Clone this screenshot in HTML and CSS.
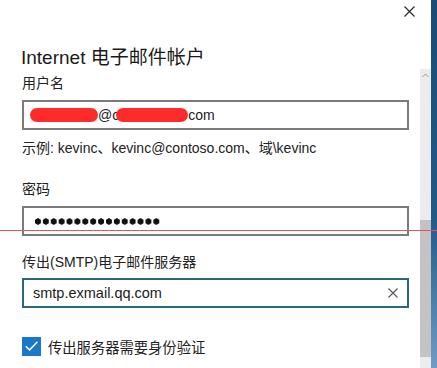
FILE: index.html
```html
<!DOCTYPE html>
<html lang="zh-CN">
<head>
    <meta charset="UTF-8">
    <title>Internet 电子邮件帐户</title>
    <link rel="stylesheet" href="styles.css">
</head>
<body>
<div class="screen">
    <div class="dialog">
        <div class="content">
            <div class="topbar">
                <button class="close-btn" aria-label="关闭">
                    <svg width="11" height="11" viewBox="0 0 11 11"><path d="M0.5 0.5 L10.5 10.5 M10.5 0.5 L0.5 10.5" stroke="#2b2b2b" stroke-width="1.2" fill="none"/></svg>
                </button>
            </div>
            <h1 class="title">Internet 电子邮件帐户</h1>

            <div class="label label-first">用户名</div>
            <div class="field"><span class="blot blot-a"></span>@c<span class="blot blot-b"></span>com</div>
            <p class="hint">示例: kevinc、kevinc@contoso.com、域\kevinc</p>

            <div class="label label-gap">密码</div>
            <div class="field"><span class="dots"></span></div>

            <div class="label label-mid">传出(SMTP)电子邮件服务器</div>
            <div class="field field-focus">
                <span>smtp.exmail.qq.com</span>
                <svg class="clear-icon" width="10" height="10" viewBox="0 0 10 10"><path d="M0.5 0.5 L9.5 9.5 M9.5 0.5 L0.5 9.5" stroke="#555" stroke-width="1.1" fill="none"/></svg>
            </div>

            <div class="check-row">
                <span class="checkbox">
                    <svg width="20" height="20" viewBox="0 0 20 20"><path d="M4 10.2 L8 14.2 L16.2 5.6" stroke="#fff" stroke-width="1.6" fill="none"/></svg>
                </span>
                传出服务器需要身份验证
            </div>
        </div>
        <div class="scrollbar">
            <span class="scroll-arrow">
                <svg width="7" height="5" viewBox="0 0 7 5"><path d="M0.5 4 L3.5 1 L6.5 4" stroke="#9a9a9a" stroke-width="1" fill="none"/></svg>
            </span>
            <span class="scroll-thumb"></span>
        </div>
    </div>
    <div class="desktop"></div>
    <div class="guide-line"></div>
</div>
</body>
</html>
```

FILE: styles.css
```css
html, body {
    margin: 0;
    padding: 0;
    background: #fff;
}

.screen {
    position: relative;
    display: flex;
    width: 437px;
    height: 368px;
    overflow: hidden;
    font-family: "Liberation Sans", "Noto Sans CJK SC", sans-serif;
    color: #1b1b1b;
}

.dialog {
    display: flex;
    width: 431px;
    background: #fff;
}

.content {
    width: 420px;
    padding-left: 22px;
    box-sizing: border-box;
}

.topbar {
    display: flex;
    justify-content: flex-end;
    height: 46px;
}

.close-btn {
    width: 22px;
    height: 22px;
    padding: 0;
    border: none;
    background: none;
    display: flex;
    align-items: center;
    justify-content: center;
}

.title {
    margin: 0 0 0 -1px;
    font-size: 19px;
    font-weight: normal;
    line-height: 24px;
    height: 24px;
    color: #1a1a1a;
}

.label {
    font-size: 14px;
    line-height: 20px;
    height: 20px;
    margin-bottom: 7px;
    color: #222;
}

.label-first {
    margin-top: 3px;
}

.label-gap {
    margin-top: 21px;
}

.label-mid {
    margin-top: 16px;
    margin-bottom: 6px;
}

.field {
    display: flex;
    align-items: center;
    width: 387px;
    height: 30px;
    box-sizing: border-box;
    border: 2px solid #7b7b7b;
    padding: 0 9px;
    font-size: 14px;
    color: #1b1b1b;
    background: #fff;
}

.field-focus {
    justify-content: space-between;
    border-color: #2a6878;
    font-size: 14.5px;
}

.blot {
    display: inline-block;
    height: 14px;
    border-radius: 7px;
    background: #ff2b2b;
}

.blot-a {
    width: 68px;
    margin-left: -3px;
}

.blot-b {
    width: 72px;
    margin-left: -3px;
}

.dots {
    display: inline-block;
    width: 127px;
    height: 7px;
    margin-left: 1px;
    background: radial-gradient(circle, #111 2.9px, transparent 3.4px) 0 0 / 7.9px 7px repeat-x;
}

.hint {
    margin: 8px 0 0;
    font-size: 14px;
    line-height: 20px;
    height: 20px;
    color: #222;
}

.check-row {
    display: flex;
    align-items: center;
    gap: 7px;
    margin-top: 28px;
    height: 20px;
    font-size: 14.3px;
    color: #222;
}

.checkbox {
    display: flex;
    width: 19px;
    height: 19px;
    background: #1a78c9;
    align-items: center;
    justify-content: center;
}

.scrollbar {
    display: flex;
    flex-direction: column;
    align-items: center;
    width: 11px;
    margin-top: 69px;
    background: #ececec;
}

.scroll-arrow {
    display: flex;
    height: 12px;
    align-items: center;
}

.scroll-thumb {
    width: 11px;
    height: 137px;
    margin-top: 139px;
    background: #c3c3c3;
}

.desktop {
    width: 6px;
    background: linear-gradient(#1c4a79, #25598a 60%, #6f9cc4);
}

.guide-line {
    position: absolute;
    left: 0;
    right: 0;
    top: 230px;
    height: 1px;
    background: #e2585a;
}
```
